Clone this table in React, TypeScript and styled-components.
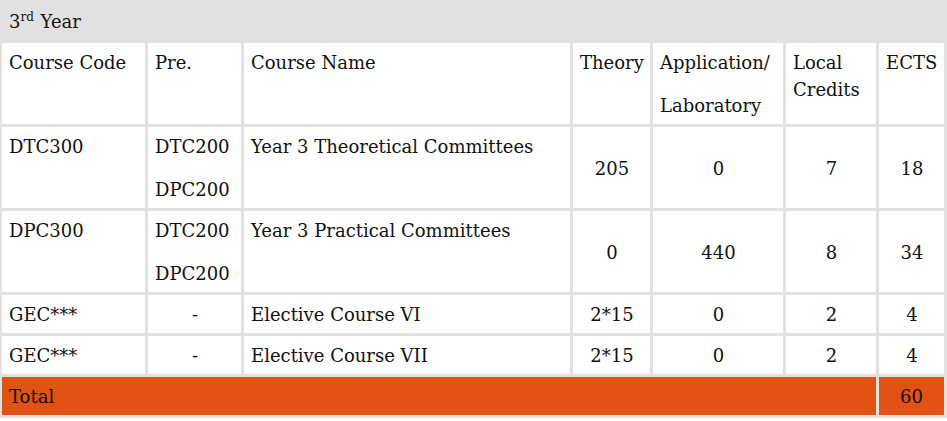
import React from 'react'
import styled, { createGlobalStyle } from 'styled-components'

const GlobalStyle = createGlobalStyle`
  html, body {
    margin: 0;
    padding: 0;
    background: #ffffff;
  }
  body {
    font-family: "DejaVu Serif", "Liberation Serif", serif;
    color: #111111;
  }
`

type Row = {
  code: string
  pre: string[]
  name: string
  theory: string
  lab: string
  credits: string
  ects: string
}

const rows: Row[] = [
  { code: 'DTC300', pre: ['DTC200', 'DPC200'], name: 'Year 3 Theoretical Committees', theory: '205', lab: '0', credits: '7', ects: '18' },
  { code: 'DPC300', pre: ['DTC200', 'DPC200'], name: 'Year 3 Practical Committees', theory: '0', lab: '440', credits: '8', ects: '34' },
  { code: 'GEC***', pre: ['-'], name: 'Elective Course VI', theory: '2*15', lab: '0', credits: '2', ects: '4' },
  { code: 'GEC***', pre: ['-'], name: 'Elective Course VII', theory: '2*15', lab: '0', credits: '2', ects: '4' },
]

const App = () => {
  return (
    <>
      <GlobalStyle />
      <Table>
        <colgroup>
          <col style={{ width: 143 }} />
          <col style={{ width: 93 }} />
          <col style={{ width: 326 }} />
          <col style={{ width: 77 }} />
          <col style={{ width: 130 }} />
          <col style={{ width: 90 }} />
          <col style={{ width: 65 }} />
        </colgroup>
        <tbody>
          <tr>
            <TitleCell colSpan={7}>
              3<sup>rd</sup> Year
            </TitleCell>
          </tr>
          <tr>
            <Cell>Course Code</Cell>
            <Cell>Pre.</Cell>
            <Cell>Course Name</Cell>
            <Cell>Theory</Cell>
            <Cell>
              <P>Application/</P>
              <P>Laboratory</P>
            </Cell>
            <Cell>Local Credits</Cell>
            <Cell>ECTS</Cell>
          </tr>
          {rows.map((r, i) => (
            <tr key={i}>
              <Cell>{r.code}</Cell>
              <Cell $center={r.pre.length === 1}>
                {r.pre.map((p) => (
                  <P key={p}>{p}</P>
                ))}
              </Cell>
              <Cell>{r.name}</Cell>
              <Cell $center $middle>{r.theory}</Cell>
              <Cell $center $middle>{r.lab}</Cell>
              <Cell $center $middle>{r.credits}</Cell>
              <Cell $center $middle>{r.ects}</Cell>
            </tr>
          ))}
          <tr>
            <TotalCell colSpan={6}>Total</TotalCell>
            <TotalCell $center>60</TotalCell>
          </tr>
        </tbody>
      </Table>
    </>
  )
}

export default App

const Table = styled.table`
  margin: -1px 0 0 -1px;
  width: 948px;
  table-layout: fixed;
  border-collapse: separate;
  border-spacing: 3px;
  background: #e1e1e1;
  font-size: 18px;
`

const Cell = styled.td<{ $center?: boolean; $middle?: boolean }>`
  box-sizing: border-box;
  background: #ffffff;
  padding: 6px 6px 5px 7px;
  line-height: 27px;
  vertical-align: ${(p) => (p.$middle ? 'middle' : 'top')};
  text-align: ${(p) => (p.$center ? 'center' : 'left')};
  white-space: nowrap;

  &:nth-child(6) {
    white-space: normal;
  }
`

const P = styled.p`
  margin: 0;
  white-space: nowrap;
  & + & {
    margin-top: 16px;
  }
`

const TitleCell = styled.td`
  background: #e1e1e1;
  padding: 6px 7px 5px 7px;
  line-height: 27px;
  text-align: left;

  sup {
    font-size: 12px;
    line-height: 0;
    vertical-align: 7px;
    margin-right: 1px;
  }
`

const TotalCell = styled.td<{ $center?: boolean }>`
  background: #e05312;
  padding: 6px 7px 5px 7px;
  line-height: 27px;
  text-align: ${(p) => (p.$center ? 'center' : 'left')};
`
